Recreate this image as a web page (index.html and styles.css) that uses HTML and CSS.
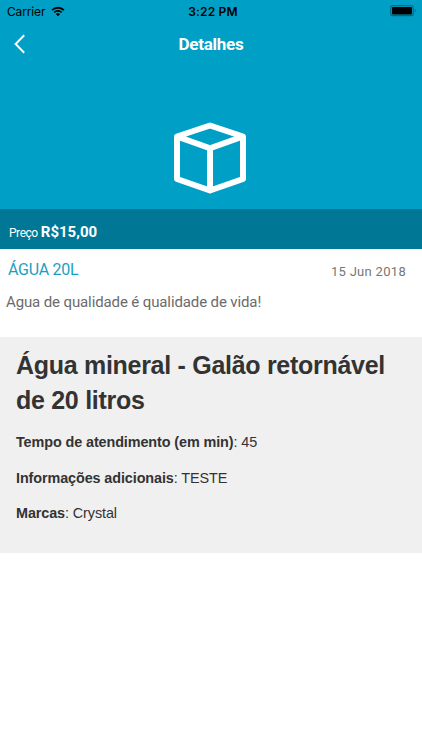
FILE: index.html
```html
<!DOCTYPE html>
<html lang="pt-BR">
<head>
    <meta charset="UTF-8">
    <meta name="viewport" content="width=device-width, initial-scale=1.0">
    <title>Detalhes</title>
    <link rel="stylesheet" href="styles.css">
</head>
<body>

<header class="hero">
    <div class="status-bar">
        <div class="carrier">
            <span class="carrier-name">Carrier</span>
            <svg class="wifi" width="14" height="11" viewBox="0 0 15 11">
                <path d="M1.2 4 A9 9 0 0 1 13.8 4" fill="none" stroke="#000" stroke-width="2"/>
                <path d="M3.5 6.4 A5.7 5.7 0 0 1 11.5 6.4" fill="none" stroke="#000" stroke-width="1.9"/>
                <path d="M7.5 10.6 L5.2 8.3 A3.3 3.3 0 0 1 9.8 8.3 Z"/>
            </svg>
        </div>
        <span class="time">3:22 PM</span>
        <svg class="battery" width="27" height="12" viewBox="0 0 27 12">
            <rect x="0.7" y="0.7" width="22.6" height="10" rx="2.2" fill="none" stroke="#006a85" stroke-width="1.2"/>
            <rect x="2" y="2" width="20" height="7.4" rx="0.8"/>
            <path d="M24.8 3.8 A2.2 2.2 0 0 1 24.8 7.6 Z" fill="#006a85"/>
        </svg>
    </div>

    <nav class="nav-bar">
        <a class="back" href="#" aria-label="Voltar">
            <svg width="12" height="20" viewBox="0 0 12 20">
                <path d="M10.2 1.3 L1.6 10 L10.2 18.7" fill="none" stroke="#fff" stroke-width="2"/>
            </svg>
        </a>
        <h1 class="nav-title">Detalhes</h1>
    </nav>

    <svg class="box-icon" width="72" height="74" viewBox="0 0 72 74">
        <path d="M36 4.5 L69 15.5 V58 L36 69.5 L3 58 V15.5 Z M3 15.5 L36 27.3 L69 15.5 M36 27.3 V69.5" fill="none" stroke="#fff" stroke-width="6" stroke-linejoin="round"/>
    </svg>
</header>

<div class="price">
    <span class="price-label">Preço</span>
    <strong class="price-value">R$15,00</strong>
</div>

<div class="summary">
    <div class="summary-top">
        <h2 class="product">ÁGUA 20L</h2>
        <span class="date">15 Jun 2018</span>
    </div>
    <p class="tagline">Agua de qualidade é qualidade de vida!</p>
</div>

<div class="details">
    <h2 class="details-title">Água mineral - Galão retornável de 20 litros</h2>
    <p><strong>Tempo de atendimento (em min)</strong>: 45</p>
    <p><strong>Informações adicionais</strong>: TESTE</p>
    <p><strong>Marcas</strong>: Crystal</p>
</div>

</body>
</html>
```
FILE: styles.css
```css
body {
    font-family: Roboto, "Liberation Sans", sans-serif;
    margin: 0;
    padding: 0;
    background-color: #fff;
    color: #333;
}
h1, h2, p {
    margin: 0;
}
.hero {
    height: 209px;
    background-color: #009fc6;
}
.status-bar {
    display: grid;
    grid-template-columns: 1fr auto 1fr;
    align-items: center;
    height: 22px;
    padding: 0 5px 0 7px;
    font-family: Inter, sans-serif;
    color: #000;
}
.carrier {
    display: flex;
    align-items: center;
    gap: 6px;
}
.carrier-name {
    font-size: 12px;
    letter-spacing: -0.15px;
}
.time {
    padding-left: 2px;
    font-size: 12px;
    font-weight: 600;
    letter-spacing: 0.2px;
}
.battery {
    justify-self: end;
}
.nav-bar {
    display: grid;
    grid-template-columns: 1fr auto 1fr;
    align-items: center;
    height: 44px;
    padding: 0 14px;
}
.back {
    display: flex;
}
.nav-title {
    color: #fff;
    font-size: 17px;
    font-weight: 700;
    letter-spacing: -0.25px;
    line-height: 20px;
    padding-bottom: 1px;
}
.box-icon {
    display: block;
    margin: 55px auto 0 174px;
}
.price {
    display: flex;
    align-items: baseline;
    gap: 3px;
    box-sizing: border-box;
    height: 40px;
    padding: 14px 9px 0;
    background-color: #007794;
    color: #fff;
    line-height: 18px;
}
.price-label {
    font-size: 12px;
    letter-spacing: -0.45px;
}
.price-value {
    font-size: 15px;
}
.summary {
    box-sizing: border-box;
    height: 88px;
    padding: 11px 16px 0 6px;
}
.summary-top {
    display: flex;
    justify-content: space-between;
    padding-left: 2px;
}
.product {
    color: #1a9fc4;
    font-size: 16px;
    font-weight: 400;
    letter-spacing: -0.25px;
    line-height: 20px;
}
.date {
    padding-top: 2px;
    color: #777;
    font-size: 13px;
    letter-spacing: 0.3px;
    line-height: 20px;
}
.tagline {
    margin-top: 9px;
    color: #6b6b6b;
    font-size: 15px;
    letter-spacing: -0.12px;
    line-height: 22px;
}
.details {
    box-sizing: border-box;
    height: 216px;
    padding: 11px 16px;
    background-color: #f0f0f0;
    font-family: "Liberation Sans", Arial, sans-serif;
    font-size: 14.4px;
    letter-spacing: -0.1px;
    line-height: 20px;
}
.details-title {
    margin-bottom: 15px;
    font-size: 25px;
    letter-spacing: -0.29px;
    line-height: 34.5px;
}
.details p {
    margin-bottom: 15.5px;
}
```
